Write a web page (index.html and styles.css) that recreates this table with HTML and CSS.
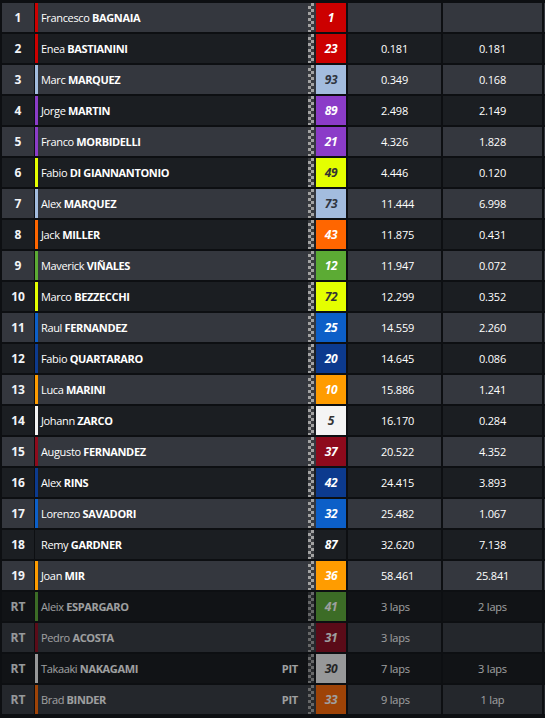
FILE: index.html
```html
<!DOCTYPE html>
<html>
<head>
<meta charset="utf-8">
<link rel="stylesheet" href="styles.css">
</head>
<body>
<div class="board">
  <div class="row odd"><div class="pos">1</div><div class="rider ducati"><span class="name">Francesco <b>BAGNAIA</b></span><span class="flag"></span><span class="num">1</span></div><div class="gap"></div><div class="diff"></div><div class="extra"></div></div>
  <div class="row even"><div class="pos">2</div><div class="rider ducati"><span class="name">Enea <b>BASTIANINI</b></span><span class="flag"></span><span class="num">23</span></div><div class="gap">0.181</div><div class="diff">0.181</div><div class="extra"></div></div>
  <div class="row odd"><div class="pos">3</div><div class="rider gresini"><span class="name">Marc <b>MARQUEZ</b></span><span class="flag"></span><span class="num">93</span></div><div class="gap">0.349</div><div class="diff">0.168</div><div class="extra"></div></div>
  <div class="row even"><div class="pos">4</div><div class="rider pramac"><span class="name">Jorge <b>MARTIN</b></span><span class="flag"></span><span class="num">89</span></div><div class="gap">2.498</div><div class="diff">2.149</div><div class="extra"></div></div>
  <div class="row odd"><div class="pos">5</div><div class="rider pramac"><span class="name">Franco <b>MORBIDELLI</b></span><span class="flag"></span><span class="num">21</span></div><div class="gap">4.326</div><div class="diff">1.828</div><div class="extra"></div></div>
  <div class="row even"><div class="pos">6</div><div class="rider vr46"><span class="name">Fabio <b>DI GIANNANTONIO</b></span><span class="flag"></span><span class="num">49</span></div><div class="gap">4.446</div><div class="diff">0.120</div><div class="extra"></div></div>
  <div class="row odd"><div class="pos">7</div><div class="rider gresini"><span class="name">Alex <b>MARQUEZ</b></span><span class="flag"></span><span class="num">73</span></div><div class="gap">11.444</div><div class="diff">6.998</div><div class="extra"></div></div>
  <div class="row even"><div class="pos">8</div><div class="rider ktm"><span class="name">Jack <b>MILLER</b></span><span class="flag"></span><span class="num">43</span></div><div class="gap">11.875</div><div class="diff">0.431</div><div class="extra"></div></div>
  <div class="row odd"><div class="pos">9</div><div class="rider aprilia"><span class="name">Maverick <b>VIÑALES</b></span><span class="flag"></span><span class="num">12</span></div><div class="gap">11.947</div><div class="diff">0.072</div><div class="extra"></div></div>
  <div class="row even"><div class="pos">10</div><div class="rider vr46"><span class="name">Marco <b>BEZZECCHI</b></span><span class="flag"></span><span class="num">72</span></div><div class="gap">12.299</div><div class="diff">0.352</div><div class="extra"></div></div>
  <div class="row odd"><div class="pos">11</div><div class="rider trackhouse"><span class="name">Raul <b>FERNANDEZ</b></span><span class="flag"></span><span class="num">25</span></div><div class="gap">14.559</div><div class="diff">2.260</div><div class="extra"></div></div>
  <div class="row even"><div class="pos">12</div><div class="rider yamaha"><span class="name">Fabio <b>QUARTARARO</b></span><span class="flag"></span><span class="num">20</span></div><div class="gap">14.645</div><div class="diff">0.086</div><div class="extra"></div></div>
  <div class="row odd"><div class="pos">13</div><div class="rider honda"><span class="name">Luca <b>MARINI</b></span><span class="flag"></span><span class="num">10</span></div><div class="gap">15.886</div><div class="diff">1.241</div><div class="extra"></div></div>
  <div class="row even"><div class="pos">14</div><div class="rider lcr"><span class="name">Johann <b>ZARCO</b></span><span class="flag"></span><span class="num">5</span></div><div class="gap">16.170</div><div class="diff">0.284</div><div class="extra"></div></div>
  <div class="row odd"><div class="pos">15</div><div class="rider tech3"><span class="name">Augusto <b>FERNANDEZ</b></span><span class="flag"></span><span class="num">37</span></div><div class="gap">20.522</div><div class="diff">4.352</div><div class="extra"></div></div>
  <div class="row even"><div class="pos">16</div><div class="rider yamaha"><span class="name">Alex <b>RINS</b></span><span class="flag"></span><span class="num">42</span></div><div class="gap">24.415</div><div class="diff">3.893</div><div class="extra"></div></div>
  <div class="row odd"><div class="pos">17</div><div class="rider trackhouse"><span class="name">Lorenzo <b>SAVADORI</b></span><span class="flag"></span><span class="num">32</span></div><div class="gap">25.482</div><div class="diff">1.067</div><div class="extra"></div></div>
  <div class="row even"><div class="pos">18</div><div class="rider none"><span class="name">Remy <b>GARDNER</b></span><span class="flag"></span><span class="num">87</span></div><div class="gap">32.620</div><div class="diff">7.138</div><div class="extra"></div></div>
  <div class="row odd"><div class="pos">19</div><div class="rider honda"><span class="name">Joan <b>MIR</b></span><span class="flag"></span><span class="num">36</span></div><div class="gap">58.461</div><div class="diff">25.841</div><div class="extra"></div></div>
  <div class="row even rt"><div class="pos">RT</div><div class="rider aprilia"><span class="name">Aleix <b>ESPARGARO</b></span><span class="flag"></span><span class="num">41</span></div><div class="gap">3 laps</div><div class="diff">2 laps</div><div class="extra"></div></div>
  <div class="row odd rt"><div class="pos">RT</div><div class="rider tech3"><span class="name">Pedro <b>ACOSTA</b></span><span class="flag"></span><span class="num">31</span></div><div class="gap">3 laps</div><div class="diff"></div><div class="extra"></div></div>
  <div class="row even rt"><div class="pos">RT</div><div class="rider lcr"><span class="name">Takaaki <b>NAKAGAMI</b></span><span class="pit">PIT</span><span class="flag"></span><span class="num">30</span></div><div class="gap">7 laps</div><div class="diff">3 laps</div><div class="extra"></div></div>
  <div class="row odd rt"><div class="pos">RT</div><div class="rider ktm"><span class="name">Brad <b>BINDER</b></span><span class="pit">PIT</span><span class="flag"></span><span class="num">33</span></div><div class="gap">9 laps</div><div class="diff">1 lap</div><div class="extra"></div></div>
</div>
</body>
</html>
```
FILE: styles.css
```css
html, body {
  margin: 0;
  padding: 0;
  background: #0d0f12;
  overflow: hidden;
  width: 545px;
  height: 718px;
}
body {
  font-family: "Open Sans", "Noto Sans", sans-serif;
  font-size: 11px;
  color: #ffffff;
}
.board {
  display: flex;
  flex-direction: column;
  gap: 2px;
  padding: 3px 0 0 2px;
}
.row {
  display: flex;
  height: 29px;
}
.row > div {
  height: 29px;
  display: flex;
  align-items: center;
  flex-shrink: 0;
}
.row.odd > div { background: #34373e; }
.row.even > div { background: #1b1e22; }
.row.rt { opacity: 0.6; }
.row.rt.even > div { background: #14171a; }

.pos {
  width: 32px;
  justify-content: center;
  font-weight: 700;
  font-size: 12px;
  color: #f2f4f7;
}
.rider {
  margin-left: 1px;
  border-left: 3px solid var(--team);
  padding-left: 3px;
  box-sizing: border-box;
  width: 311px;
}
.name {
  flex: 1;
  letter-spacing: -0.35px;
  white-space: nowrap;
}
.name b { font-weight: 700; }
.pit {
  font-weight: 700;
  margin-right: 10px;
  letter-spacing: -0.2px;
}
.flag {
  width: 6px;
  height: 29px;
  margin-right: 2px;
  background-color: #3a3c40;
  background-image: conic-gradient(#a3a3a3 0 25%, transparent 0 50%, #a3a3a3 0 75%, transparent 0);
  background-size: 6px 6px;
}
.num {
  width: 30px;
  height: 29px;
  display: flex;
  align-items: center;
  justify-content: center;
  background: var(--team);
  color: var(--ink);
  font-weight: 700;
  font-style: italic;
  font-size: 12px;
  letter-spacing: -0.3px;
}
.gap {
  width: 93px;
  margin-left: 2px;
  padding-left: 33px;
  box-sizing: border-box;
  letter-spacing: -0.2px;
}
.diff {
  width: 99px;
  margin-left: 2px;
  justify-content: center;
  letter-spacing: -0.2px;
}
.extra {
  width: 1px;
  margin-left: 2px;
}

.ducati { --team: #cc0000; --ink: #ffffff; }
.gresini { --team: #a3bcde; --ink: #2f3440; }
.pramac { --team: #8b3cc8; --ink: #ffffff; }
.vr46 { --team: #e4ff00; --ink: #333333; }
.ktm { --team: #ff6600; --ink: #ffffff; }
.aprilia { --team: #5cab34; --ink: #ffffff; }
.trackhouse { --team: #0c5fc8; --ink: #ffffff; }
.yamaha { --team: #0c3a8e; --ink: #ffffff; }
.honda { --team: #ff9c00; --ink: #ffffff; }
.lcr { --team: #f4f4f4; --ink: #333333; }
.tech3 { --team: #8e0a1c; --ink: #ffffff; }
.none { --team: #1b1e22; --ink: #ffffff; }
```
